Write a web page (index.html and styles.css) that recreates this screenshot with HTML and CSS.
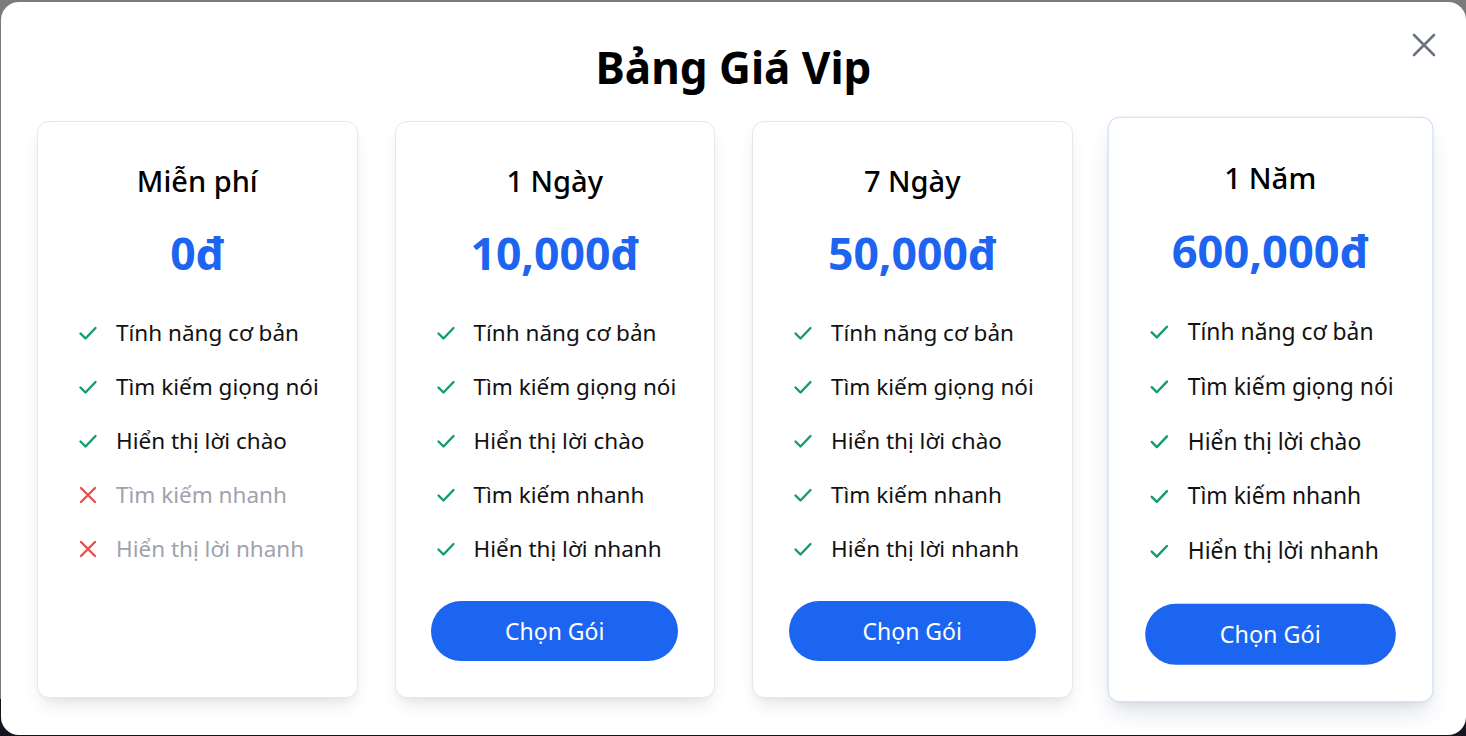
FILE: index.html
```html
<!DOCTYPE html>
<html lang="vi">
<head>
<meta charset="utf-8">
<title>Bảng Giá Vip</title>
<link rel="stylesheet" href="styles.css">
</head>
<body>
<div class="modal">
  <button class="close" aria-label="Đóng">
    <svg viewBox="0 0 24 24" width="24" height="24"><path d="M2 2 L22 22 M22 2 L2 22" stroke="#6b7280" stroke-width="2.6" stroke-linecap="round" fill="none"/></svg>
  </button>
  <h1 class="title">Bảng Giá Vip</h1>
  <div class="plans">
    <div class="card">
      <h2 class="plan-name">Miễn phí</h2>
      <div class="price">0đ</div>
      <ul class="features">
        <li class="yes"><svg class="ic" viewBox="0 0 20 20"><path d="M2.5 10.5 L7.5 15.5 L17.5 5" /></svg><span>Tính năng cơ bản</span></li>
        <li class="yes"><svg class="ic" viewBox="0 0 20 20"><path d="M2.5 10.5 L7.5 15.5 L17.5 5" /></svg><span>Tìm kiếm giọng nói</span></li>
        <li class="yes"><svg class="ic" viewBox="0 0 20 20"><path d="M2.5 10.5 L7.5 15.5 L17.5 5" /></svg><span>Hiển thị lời chào</span></li>
        <li class="no"><svg class="ic" viewBox="0 0 20 20"><path d="M3 3 L17 17 M17 3 L3 17" /></svg><span>Tìm kiếm nhanh</span></li>
        <li class="no"><svg class="ic" viewBox="0 0 20 20"><path d="M3 3 L17 17 M17 3 L3 17" /></svg><span>Hiển thị lời nhanh</span></li>
      </ul>
    </div>
    <div class="card">
      <h2 class="plan-name">1 Ngày</h2>
      <div class="price">10,000đ</div>
      <ul class="features">
        <li class="yes"><svg class="ic" viewBox="0 0 20 20"><path d="M2.5 10.5 L7.5 15.5 L17.5 5" /></svg><span>Tính năng cơ bản</span></li>
        <li class="yes"><svg class="ic" viewBox="0 0 20 20"><path d="M2.5 10.5 L7.5 15.5 L17.5 5" /></svg><span>Tìm kiếm giọng nói</span></li>
        <li class="yes"><svg class="ic" viewBox="0 0 20 20"><path d="M2.5 10.5 L7.5 15.5 L17.5 5" /></svg><span>Hiển thị lời chào</span></li>
        <li class="yes"><svg class="ic" viewBox="0 0 20 20"><path d="M2.5 10.5 L7.5 15.5 L17.5 5" /></svg><span>Tìm kiếm nhanh</span></li>
        <li class="yes"><svg class="ic" viewBox="0 0 20 20"><path d="M2.5 10.5 L7.5 15.5 L17.5 5" /></svg><span>Hiển thị lời nhanh</span></li>
      </ul>
      <button class="choose">Chọn Gói</button>
    </div>
    <div class="card">
      <h2 class="plan-name">7 Ngày</h2>
      <div class="price">50,000đ</div>
      <ul class="features">
        <li class="yes"><svg class="ic" viewBox="0 0 20 20"><path d="M2.5 10.5 L7.5 15.5 L17.5 5" /></svg><span>Tính năng cơ bản</span></li>
        <li class="yes"><svg class="ic" viewBox="0 0 20 20"><path d="M2.5 10.5 L7.5 15.5 L17.5 5" /></svg><span>Tìm kiếm giọng nói</span></li>
        <li class="yes"><svg class="ic" viewBox="0 0 20 20"><path d="M2.5 10.5 L7.5 15.5 L17.5 5" /></svg><span>Hiển thị lời chào</span></li>
        <li class="yes"><svg class="ic" viewBox="0 0 20 20"><path d="M2.5 10.5 L7.5 15.5 L17.5 5" /></svg><span>Tìm kiếm nhanh</span></li>
        <li class="yes"><svg class="ic" viewBox="0 0 20 20"><path d="M2.5 10.5 L7.5 15.5 L17.5 5" /></svg><span>Hiển thị lời nhanh</span></li>
      </ul>
      <button class="choose">Chọn Gói</button>
    </div>
    <div class="card featured">
      <h2 class="plan-name">1 Năm</h2>
      <div class="price">600,000đ</div>
      <ul class="features">
        <li class="yes"><svg class="ic" viewBox="0 0 20 20"><path d="M2.5 10.5 L7.5 15.5 L17.5 5" /></svg><span>Tính năng cơ bản</span></li>
        <li class="yes"><svg class="ic" viewBox="0 0 20 20"><path d="M2.5 10.5 L7.5 15.5 L17.5 5" /></svg><span>Tìm kiếm giọng nói</span></li>
        <li class="yes"><svg class="ic" viewBox="0 0 20 20"><path d="M2.5 10.5 L7.5 15.5 L17.5 5" /></svg><span>Hiển thị lời chào</span></li>
        <li class="yes"><svg class="ic" viewBox="0 0 20 20"><path d="M2.5 10.5 L7.5 15.5 L17.5 5" /></svg><span>Tìm kiếm nhanh</span></li>
        <li class="yes"><svg class="ic" viewBox="0 0 20 20"><path d="M2.5 10.5 L7.5 15.5 L17.5 5" /></svg><span>Hiển thị lời nhanh</span></li>
      </ul>
      <button class="choose">Chọn Gói</button>
    </div>
  </div>
</div>
</body>
</html>
```

FILE: styles.css
```css
* { box-sizing: border-box; }
html, body { height: 100%; }
body {
  margin: 0;
  padding: 2px 0 1px 1px;
  background: linear-gradient(#7b7b7b 0, #7b7b7b 95%, #15151f 95%);
  font-family: "Noto Sans", "Open Sans", sans-serif;
  overflow: hidden;
}
.modal {
  position: relative;
  height: 733px;
  background: #fff;
  border-radius: 18px;
  padding: 38px 36px 37px 36px;
}
.close {
  position: absolute;
  top: 31px;
  right: 30px;
  width: 24px;
  height: 24px;
  padding: 0;
  border: 0;
  background: none;
  cursor: pointer;
}
.close svg { display: block; }
.title {
  margin: 0;
  text-align: center;
  font-size: 44px;
  line-height: 54px;
  font-weight: 700;
  color: #000;
}
.plans {
  margin-top: 27px;
  display: grid;
  grid-template-columns: repeat(4, minmax(0, 1fr));
  column-gap: 37px;
}
.card {
  background: #fff;
  border: 1px solid #e7e8ec;
  border-radius: 12px;
  padding: 39px 36px 36px;
  box-shadow: 0 10px 18px -4px rgba(0,0,0,0.10), 0 4px 8px -4px rgba(0,0,0,0.06);
  height: 577px;
  display: flex;
  flex-direction: column;
}
.card.featured {
  border-color: #cbd9f4;
  transform: scale(1.015);
  box-shadow: 0 14px 24px -6px rgba(40,60,110,0.16), 0 6px 10px -6px rgba(0,0,0,0.08);
}
.plan-name {
  margin: 0;
  text-align: center;
  font-size: 29px;
  line-height: 40px;
  font-weight: 500;
  color: #000;
}
.price {
  margin-top: 25px;
  text-align: center;
  font-size: 44.5px;
  line-height: 54px;
  font-weight: 700;
  color: #1d64f0;
}
.features {
  list-style: none;
  margin: 37px 0 0;
  padding: 0 0 0 4px;
  display: flex;
  flex-direction: column;
  gap: 22px;
}
.features li {
  display: flex;
  align-items: center;
  gap: 18px;
  font-size: 22.5px;
  line-height: 32px;
  color: #111;
  white-space: nowrap;
}
.ic {
  width: 20px;
  height: 20px;
  flex: none;
  fill: none;
  stroke-width: 2.4;
  stroke-linecap: round;
  stroke-linejoin: round;
}
.yes .ic { stroke: #169b6c; }
.no .ic { stroke: #ea4f4f; }
.no span { color: #9ea3ad; }
.choose {
  margin-top: auto;
  align-self: center;
  width: 247px;
  height: 60px;
  border: 0;
  border-radius: 30px;
  background: #1c65f0;
  color: #fff;
  font-family: "Noto Sans", "Open Sans", sans-serif;
  font-size: 23px;
  font-weight: 400;
  cursor: pointer;
}
```
